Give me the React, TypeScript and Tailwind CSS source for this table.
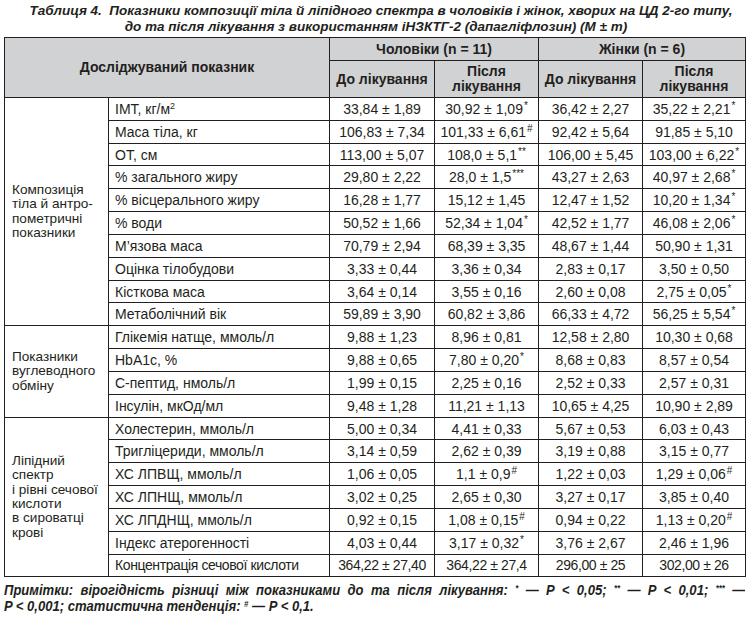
type Row = [string, string, string, string, string];

const groups: { title: string[]; rows: Row[] }[] = [
  {
    title: ["Композиція", "тіла й антро-", "пометричні", "показники"],
    rows: [
      ["ІМТ, кг/м²", "33,84 ± 1,89", "30,92 ± 1,09*", "36,42 ± 2,27", "35,22 ± 2,21*"],
      ["Маса тіла, кг", "106,83 ± 7,34", "101,33 ± 6,61#", "92,42 ± 5,64", "91,85 ± 5,10"],
      ["ОТ, см", "113,00 ± 5,07", "108,0 ± 5,1**", "106,00 ± 5,45", "103,00 ± 6,22*"],
      ["% загального жиру", "29,80 ± 2,22", "28,0 ± 1,5***", "43,27 ± 2,63", "40,97 ± 2,68*"],
      ["% вісцерального жиру", "16,28 ± 1,77", "15,12 ± 1,45", "12,47 ± 1,52", "10,20 ± 1,34*"],
      ["% води", "50,52 ± 1,66", "52,34 ± 1,04*", "42,52 ± 1,77", "46,08 ± 2,06*"],
      ["М’язова маса", "70,79 ± 2,94", "68,39 ± 3,35", "48,67 ± 1,44", "50,90 ± 1,31"],
      ["Оцінка тілобудови", "3,33 ± 0,44", "3,36 ± 0,34", "2,83 ± 0,17", "3,50 ± 0,50"],
      ["Кісткова маса", "3,64 ± 0,14", "3,55 ± 0,16", "2,60 ± 0,08", "2,75 ± 0,05*"],
      ["Метаболічний вік", "59,89 ± 3,90", "60,82 ± 3,86", "66,33 ± 4,72", "56,25 ± 5,54*"],
    ],
  },
  {
    title: ["Показники", "вуглеводного", "обміну"],
    rows: [
      ["Глікемія натще, ммоль/л", "9,88 ± 1,23", "8,96 ± 0,81", "12,58 ± 2,80", "10,30 ± 0,68"],
      ["HbA1c, %", "9,88 ± 0,65", "7,80 ± 0,20*", "8,68 ± 0,83", "8,57 ± 0,54"],
      ["С-пептид, нмоль/л", "1,99 ± 0,15", "2,25 ± 0,16", "2,52 ± 0,33", "2,57 ± 0,31"],
      ["Інсулін, мкОд/мл", "9,48 ± 1,28", "11,21 ± 1,13", "10,65 ± 4,25", "10,90 ± 2,89"],
    ],
  },
  {
    title: ["Ліпідний", "спектр", "і рівні сечової", "кислоти", "в сироватці", "крові"],
    rows: [
      ["Холестерин, ммоль/л", "5,00 ± 0,34", "4,41 ± 0,33", "5,67 ± 0,53", "6,03 ± 0,43"],
      ["Тригліцериди, ммоль/л", "3,14 ± 0,59", "2,62 ± 0,39", "3,19 ± 0,88", "3,15 ± 0,77"],
      ["ХС ЛПВЩ, ммоль/л", "1,06 ± 0,05", "1,1 ± 0,9#", "1,22 ± 0,03", "1,29 ± 0,06#"],
      ["ХС ЛПНЩ, ммоль/л", "3,02 ± 0,25", "2,65 ± 0,30", "3,27 ± 0,17", "3,85 ± 0,40"],
      ["ХС ЛПДНЩ, ммоль/л", "0,92 ± 0,15", "1,08 ± 0,15#", "0,94 ± 0,22", "1,13 ± 0,20#"],
      ["Індекс атерогенності", "4,03 ± 0,44", "3,17 ± 0,32*", "3,76 ± 2,67", "2,46 ± 1,96"],
      ["Концентрація сечової кислоти", "364,22 ± 27,40", "364,22 ± 27,4", "296,00 ± 25", "302,00 ± 26"],
    ],
  },
];

// split "1,1 ± 0,9#" into value and trailing marks
const Value = ({ v }: { v: string }) => {
  const m = v.match(/^(.*?)([*#]*)$/);
  const base = m ? m[1] : v;
  const mark = m ? m[2] : "";
  return (
    <>
      {base}
      {mark && <sup className="text-[10px] ml-[1px]">{mark}</sup>}
    </>
  );
};

const cell = "border border-[#231f20] h-[22.84px] leading-none";

export default function App() {
  return (
    <div className="w-[752px] h-[624px] bg-white text-[#231f20] font-['Liberation_Sans',Arial,sans-serif] overflow-hidden">
      <div className="pt-[3px] px-[2px] text-center text-[13.5px] leading-[16px] font-bold italic whitespace-nowrap">
        <div className="pl-[10px]">Таблиця 4.&nbsp; Показники композиції тіла й ліпідного спектра в чоловіків і жінок, хворих на ЦД 2-го типу,</div>
        <div>до та після лікування з використанням іНЗКТГ-2 (дапагліфлозин) (M ± m)</div>
      </div>
      <table className="mt-[2px] ml-[4px] w-[741px] border-collapse table-fixed text-[14px]">
        <colgroup>
          <col className="w-[104px]" />
          <col className="w-[221px]" />
          <col className="w-[105px]" />
          <col className="w-[104px]" />
          <col className="w-[104px]" />
          <col className="w-[103px]" />
        </colgroup>
        <thead className="bg-[#d1d2d4] font-bold text-[14px]">
          <tr className="h-[23px]">
            <th rowSpan={2} colSpan={2} className="border border-[#231f20] font-bold">
              Досліджуваний показник
            </th>
            <th colSpan={2} className="border border-[#231f20] font-bold">Чоловіки (n = 11)</th>
            <th colSpan={2} className="border border-[#231f20] font-bold">Жінки (n = 6)</th>
          </tr>
          <tr className="h-[37px] leading-[15px]">
            <th className="border border-[#231f20] font-bold">До лікування</th>
            <th className="border border-[#231f20] font-bold">
              Після
              <br />
              лікування
            </th>
            <th className="border border-[#231f20] font-bold">До лікування</th>
            <th className="border border-[#231f20] font-bold">
              Після
              <br />
              лікування
            </th>
          </tr>
        </thead>
        <tbody>
          {groups.map((g) =>
            g.rows.map((r, i) => {
              const last = r[0].startsWith("Концентрація");
              const ff = last ? "tracking-[-0.4px]" : "";
              return (
                <tr key={r[0]}>
                  {i === 0 && (
                    <td
                      rowSpan={g.rows.length}
                      className="border border-[#231f20] px-[7px] align-middle leading-[14.4px] text-[13.6px]"
                    >
                      {g.title.map((t) => (
                        <div key={t}>{t}</div>
                      ))}
                    </td>
                  )}
                  <td className={`${cell} px-[6px] text-left whitespace-nowrap ${ff}`}>
                    {r[0] === "ІМТ, кг/м²" ? (
                      <>
                        ІМТ, кг/м<sup className="text-[9px]">2</sup>
                      </>
                    ) : (
                      r[0]
                    )}
                  </td>
                  {r.slice(1).map((v, j) => (
                    <td key={j} className={`${cell} px-0 text-center whitespace-nowrap ${ff}`}>
                      <Value v={v} />
                    </td>
                  ))}
                </tr>
              );
            })
          )}
        </tbody>
      </table>
      <div className="mt-[5px] ml-[4px] w-[741px] overflow-hidden">
        <div className="w-[852px] origin-left scale-x-[0.87] text-[15px] leading-[16px] font-bold italic">
          <div className="text-justify [text-align-last:justify]">
            Примітки: вірогідність різниці між показниками до та після лікування: <sup className="text-[9px]">*</sup> — P &lt; 0,05;{" "}
            <sup className="text-[9px]">**</sup> — P &lt; 0,01; <sup className="text-[9px]">***</sup> —
          </div>
          <div>
            P &lt; 0,001; статистична тенденція: <sup className="text-[9px]">#</sup> — P &lt; 0,1.
          </div>
        </div>
      </div>
    </div>
  );
}
